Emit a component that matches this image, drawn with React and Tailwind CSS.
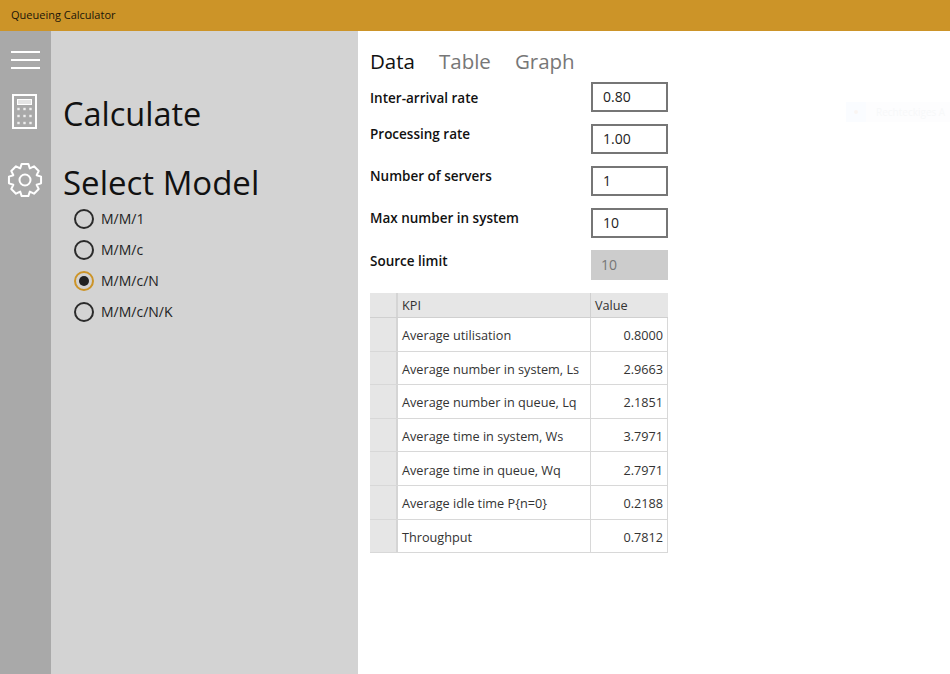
const FONT = "font-['Open_Sans','Noto_Sans',sans-serif]";

const models = ["M/M/1", "M/M/c", "M/M/c/N", "M/M/c/N/K"];

const fields = [
  { label: "Inter-arrival rate", value: "0.80", labelClass: "mt-[6px]" },
  { label: "Processing rate", value: "1.00", labelClass: "mt-0" },
  { label: "Number of servers", value: "1", labelClass: "mt-0" },
  { label: "Max number in system", value: "10", labelClass: "mt-0" },
  { label: "Source limit", value: "10", disabled: true, labelClass: "mt-[1px]" },
];

const kpis = [
  ["Average utilisation", "0.8000"],
  ["Average number in system, Ls", "2.9663"],
  ["Average number in queue, Lq", "2.1851"],
  ["Average time in system, Ws", "3.7971"],
  ["Average time in queue, Wq", "2.7971"],
  ["Average idle time P{n=0}", "0.2188"],
  ["Throughput", "0.7812"],
];

// 8 toothed gear outline, same look as the settings glyph
const gearPath = (() => {
  const pts = [];
  const teeth = 8;
  for (let i = 0; i < teeth; i++) {
    const a = (i / teeth) * Math.PI * 2 - Math.PI / 2;
    const step = (Math.PI * 2) / teeth;
    [
      [-0.5, 12.6],
      [-0.26, 16.4],
      [0.26, 16.4],
      [0.5, 12.6],
    ].forEach(([o, r]) => {
      const t = a + o * step;
      pts.push(`${(18 + r * Math.cos(t)).toFixed(2)},${(18 + r * Math.sin(t)).toFixed(2)}`);
    });
  }
  return `M${pts.join(" L")} Z`;
})();

function GearIcon() {
  return (
    <svg width="36" height="36" viewBox="0 0 36 36" fill="none" className="block">
      <path d={gearPath} stroke="#fff" strokeWidth="2" strokeLinejoin="round" />
      <circle cx="18" cy="18" r="5.5" stroke="#fff" strokeWidth="2" />
    </svg>
  );
}

function CalculatorIcon() {
  return (
    <svg width="25" height="35" viewBox="0 0 25 35" fill="none" className="block">
      <rect x="1" y="1" width="23" height="33" stroke="#fff" strokeWidth="2" />
      <rect x="5.5" y="5.5" width="14" height="5" fill="#e4e4e4" stroke="#fff" strokeWidth="1" />
      {[15, 22, 29].map((y) =>
        [6.5, 12.5, 18.5].map((x) => (
          <rect key={`${x}-${y}`} x={x - 1.2} y={y - 1.2} width="2.4" height="2.4" fill="#eee" />
        ))
      )}
    </svg>
  );
}

function Radio({ label, checked }) {
  return (
    <div className="flex items-center h-[31px]">
      <span
        className={`w-5 h-5 rounded-full border-2 flex items-center justify-center ${
          checked ? "border-[#cc9428]" : "border-[#2b2b2b]"
        }`}
      >
        {checked && <span className="w-2.5 h-2.5 rounded-full bg-[#222]" />}
      </span>
      <span className="ml-[7px] text-[14px] text-[#222]">{label}</span>
    </div>
  );
}

export default function App() {
  return (
    <div className={`${FONT} relative w-[950px] h-[674px] overflow-hidden bg-white flex flex-col`}>
      {/* title bar */}
      <div className="h-[31px] shrink-0 bg-[#cc9428] flex items-center pl-[11px] text-[11px] text-[#1a1408]">
        Queueing Calculator
      </div>

      <div className="flex flex-1 min-h-0">
        {/* icon rail */}
        <div className="w-[51px] shrink-0 bg-[#a9a9a9] flex flex-col items-center">
          <div className="mt-[20px] w-[29px] flex flex-col gap-[6px]">
            <div className="h-[2px] bg-white" />
            <div className="h-[2px] bg-white" />
            <div className="h-[2px] bg-white" />
          </div>
          <div className="mt-[25px] mr-[3px]">
            <CalculatorIcon />
          </div>
          <div className="mt-[33px] mr-[1px]">
            <GearIcon />
          </div>
        </div>

        {/* model panel */}
        <div className="w-[307px] shrink-0 bg-[#d3d3d3] pl-[12px]">
          <h1 className="mt-[60px] text-[32.5px] leading-[46px] text-[#111]">Calculate</h1>
          <h2 className="mt-[23px] text-[33px] leading-[46px] text-[#111]">Select Model</h2>
          <div className="mt-[-3px] ml-[11px]">
            {models.map((m) => (
              <Radio key={m} label={m} checked={m === "M/M/c/N"} />
            ))}
          </div>
        </div>

        {/* main content */}
        <div className="flex-1 pl-[12px]">
          <div className="flex gap-[24px] mt-[15px] text-[20.5px] leading-[31px]">
            <span className="text-[#111]">Data</span>
            <span className="text-[#777]">Table</span>
            <span className="text-[#777]">Graph</span>
          </div>

          <div className="w-[298px] mt-[5px] flex flex-col gap-[12px]">
            {fields.map((f) => (
              <div key={f.label} className="flex items-start justify-between h-[30px]">
                <span className={`text-[13.5px] leading-[20px] font-semibold text-[#111] ${f.labelClass}`}>
                  {f.label}
                </span>
                <div
                  className={`w-[77px] h-[30px] flex items-center pl-[10px] pb-[1px] text-[14px] ${
                    f.disabled
                      ? "bg-[#cccccc] text-[#777]"
                      : "bg-white border-2 border-[#767676] text-[#222]"
                  }`}
                >
                  {f.value}
                </div>
              </div>
            ))}
          </div>

          {/* KPI grid */}
          <div className="w-[298px] mt-[13px] text-[12.7px] text-[#333]">
            <div className="flex h-[25px] bg-[#e6e6e6] border-b border-[#d0d0d0]">
              <div className="w-[28px] border-r-2 border-[#d5d5d5]" />
              <div className="w-[193px] border-r border-[#d0d0d0] pl-[4px] pt-[1px] flex items-center">KPI</div>
              <div className="flex-1 pl-[4px] pt-[1px] flex items-center">Value</div>
            </div>
            {kpis.map(([name, value]) => (
              <div key={name} className="flex h-[33.6px] border-b border-[#d8d8d8]">
                <div className="w-[28px] bg-[#e6e6e6] border-r-2 border-[#d5d5d5]" />
                <div className="w-[193px] border-r border-[#d8d8d8] pl-[4px] pt-[3px] flex items-center whitespace-nowrap">
                  {name}
                </div>
                <div className="flex-1 border-r border-[#d8d8d8] pr-[4px] pt-[3px] flex items-center justify-end">
                  {value}
                </div>
              </div>
            ))}
          </div>
        </div>
      </div>

      {/* faint ghost of a screen clipping toolbar */}
      <div className="absolute left-[846px] top-[102px] w-[104px] h-[20px] bg-[#fdfdfe] flex items-center text-[10px] text-[#f7f8f9] whitespace-nowrap">
        <span className="w-[20px] h-[20px] bg-[#fafcff] flex items-center justify-center mr-[10px]">
          <span className="w-[4px] h-[4px] rounded-full bg-[#f9f5f2]" />
        </span>
        Rechteckiges A
      </div>
    </div>
  );
}
